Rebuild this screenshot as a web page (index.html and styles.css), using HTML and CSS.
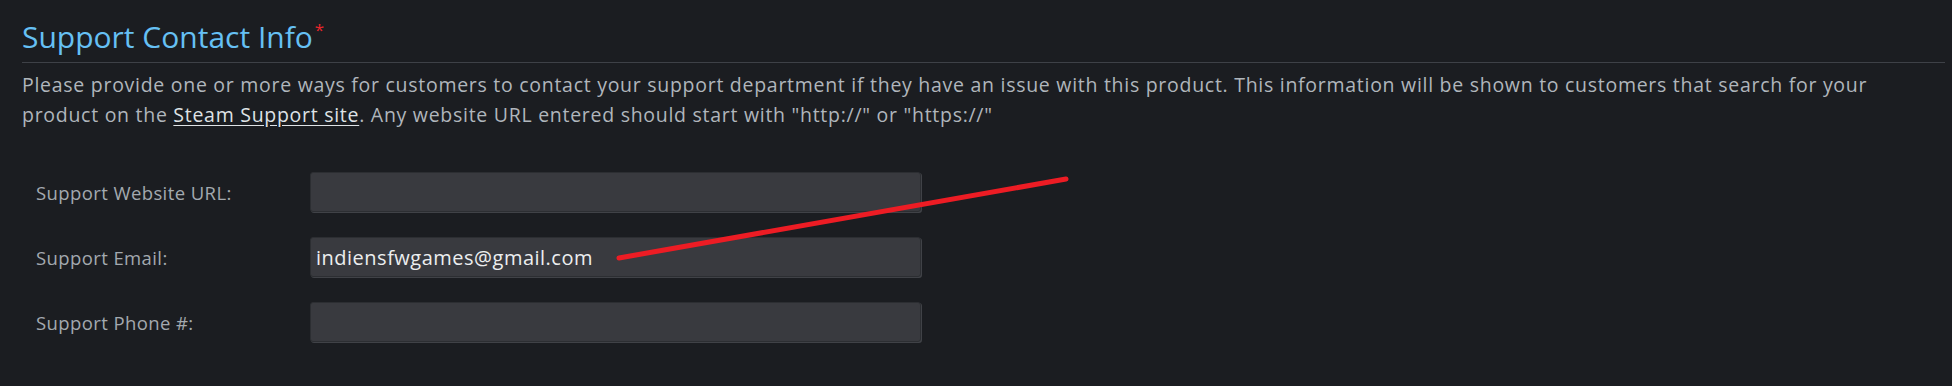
FILE: index.html
```html
<!DOCTYPE html>
<html lang="en">
<head>
<meta charset="utf-8">
<title>Support Contact Info</title>
<link rel="stylesheet" href="styles.css">
</head>
<body>
<div class="page">
  <section class="section">
    <h2 class="section-title">Support Contact Info<span class="required">*</span></h2>
    <p class="section-desc">Please provide one or more ways for customers to contact your support department if they have an issue with this product. This information will be shown to customers that search for your product on the <a class="desc-link" href="#">Steam Support site</a>. Any website URL entered should start with "http://" or "https://"</p>
    <div class="form">
      <label class="form-label" for="url">Support Website URL:</label>
      <input class="form-input" id="url" type="text" value="">
      <label class="form-label" for="email">Support Email:</label>
      <input class="form-input" id="email" type="text" value="indiensfwgames@gmail.com">
      <label class="form-label" for="phone">Support Phone #:</label>
      <input class="form-input" id="phone" type="text" value="">
    </div>
  </section>
  <svg class="annotation" width="1952" height="386" viewBox="0 0 1952 386" aria-hidden="true">
    <line x1="619" y1="258" x2="1066" y2="179" stroke="#ed1c24" stroke-width="5" stroke-linecap="round"/>
  </svg>
</div>
</body>
</html>
```

FILE: styles.css
```css
html, body {
  margin: 0;
  padding: 0;
  background: #1b1d21;
}

.page {
  position: relative;
  width: 1952px;
  height: 386px;
  overflow: hidden;
  font-family: "Open Sans", "Noto Sans", "Liberation Sans", sans-serif;
}

.section {
  padding: 12px 7px 0 22px;
}

.section-title {
  margin: 0;
  padding: 0 0 7px 0;
  font-size: 30px;
  line-height: 36px;
  font-weight: 400;
  color: #66c0f4;
  border-bottom: 1px solid #3e4147;
}

.required {
  color: #e8262b;
  font-size: 17px;
  vertical-align: 12px;
  margin-left: 2px;
}

.section-desc {
  margin: 7px 0 0 0;
  max-width: 1900px;
  font-size: 19.5px;
  line-height: 30px;
  letter-spacing: 0.72px;
  color: #b0b6bc;
}

.desc-link {
  color: #dfe3e6;
  text-decoration: underline;
  text-underline-offset: 3px;
}

.form {
  display: grid;
  grid-template-columns: 274px 611px;
  row-gap: 25px;
  align-items: center;
  margin-top: 42px;
  padding-left: 14px;
}

.form-label {
  font-size: 18.5px;
  letter-spacing: 0.4px;
  color: #a3a9af;
}

.form-input {
  box-sizing: border-box;
  height: 40px;
  width: 611px;
  margin: 0;
  padding: 0 5px;
  background: #393a3f;
  border: 1px solid #2c2e32;
  border-radius: 3px;
  box-shadow: 1px 1px 0 #404247;
  color: #eceeef;
  font-family: "Open Sans", "Noto Sans", "Liberation Sans", sans-serif;
  font-size: 20px;
  letter-spacing: 0.5px;
  outline: none;
}

.annotation {
  position: absolute;
  top: 0;
  left: 0;
  pointer-events: none;
}
```
